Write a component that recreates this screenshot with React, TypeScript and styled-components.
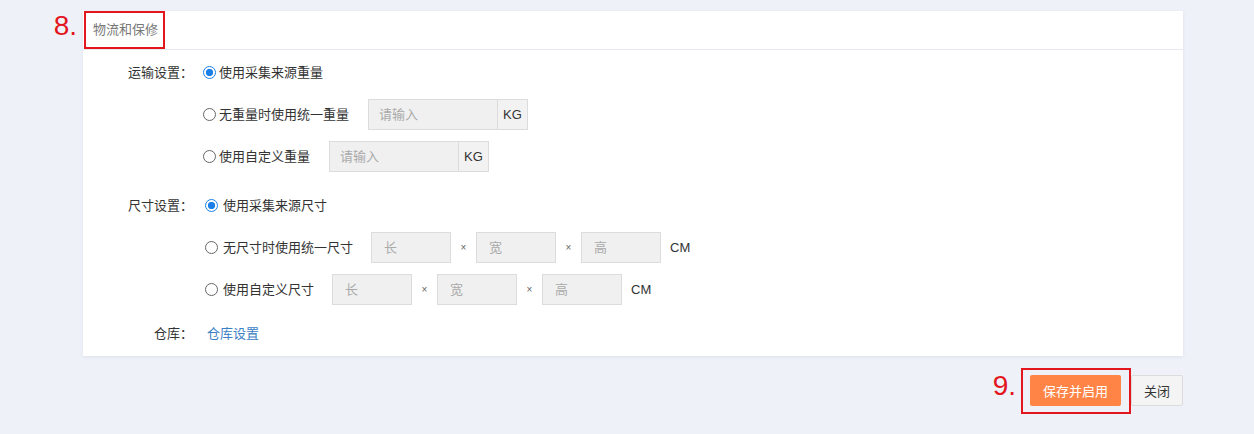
import React from "react";
import styled, { createGlobalStyle } from "styled-components";

const GlobalStyle = createGlobalStyle`
  html, body { margin: 0; padding: 0; background: #eef1f8; }
  body {
    font-family: "Liberation Sans", "Noto Sans CJK SC", sans-serif;
    font-size: 13px;
    color: #333;
  }
  * { box-sizing: border-box; }
`;

const Page = styled.div`
  width: 1254px;
  height: 434px;
  padding: 11px 0 0 83px;
`;

const Card = styled.section`
  width: 1100px;
  background: #fff;
  box-shadow: 0 1px 3px rgba(40, 50, 90, 0.08);
`;

const CardHeader = styled.header`
  height: 39px;
  border-bottom: 1px solid #e8e9ee;
  display: flex;
  align-items: center;
  padding-left: 10px;
`;

const Title = styled.h3`
  position: relative;
  margin: 0;
  font-size: 13px;
  font-weight: normal;
  line-height: 20px;
  color: #777;
`;

const MarkBox = styled.span<{ $t: number; $r: number; $b: number; $l: number }>`
  position: absolute;
  top: ${(p) => p.$t}px;
  right: ${(p) => p.$r}px;
  bottom: ${(p) => p.$b}px;
  left: ${(p) => p.$l}px;
  border: 2px solid #e3161d;
  pointer-events: none;
`;

const MarkNumber = styled.span<{ $top: number; $gap: number }>`
  position: absolute;
  top: ${(p) => p.$top}px;
  right: calc(100% + ${(p) => p.$gap}px);
  font-family: "Liberation Sans", sans-serif;
  font-size: 28px;
  line-height: 28px;
  color: #e3161d;
  white-space: nowrap;
`;

const Body = styled.div`
  padding: 7px 0 7px;
  display: flex;
  flex-direction: column;
`;

const Section = styled.div<{ $space: number }>`
  display: grid;
  grid-template-columns: 110px 1fr;
  column-gap: 10px;
  margin-top: ${(p) => p.$space}px;
`;

const Label = styled.div`
  text-align: right;
  line-height: 31px;
  height: 31px;
  color: #333;
`;

const Options = styled.div<{ $indent: number }>`
  display: flex;
  flex-direction: column;
  gap: 11px;
  padding-left: ${(p) => p.$indent}px;
`;

const OptionRow = styled.div`
  display: flex;
  align-items: center;
  height: 31px;
`;

const RadioMark = styled.span<{ $checked?: boolean }>`
  display: inline-block;
  width: 13px;
  height: 13px;
  border-radius: 50%;
  border: ${(p) => (p.$checked ? "1.5px solid #1a7fe8" : "1px solid #666")};
  background: ${(p) =>
    p.$checked
      ? "radial-gradient(circle, #1a7fe8 0 3.4px, #fff 3.9px)"
      : "#fff"};
  flex: none;
`;

const OptionText = styled.span<{ $gap: number }>`
  margin-left: ${(p) => p.$gap}px;
  line-height: 20px;
  color: #333;
`;

const InputGroup = styled.div<{ $gap: number }>`
  display: flex;
  align-items: center;
  margin-left: ${(p) => p.$gap}px;
`;

const TextInput = styled.input<{ $w: number; $pad: number }>`
  width: ${(p) => p.$w}px;
  height: 31px;
  border: 1px solid #dcdcdc;
  background: #f0f0f0;
  padding: 0 ${(p) => p.$pad}px;
  font-family: "Liberation Sans", "Noto Sans CJK SC", sans-serif;
  font-size: 13px;
  color: #333;
  outline: none;
  &::placeholder { color: #aaa; }
`;

const Addon = styled.span`
  width: 30px;
  height: 31px;
  border: 1px solid #dcdcdc;
  border-left: none;
  background: #f2f2f2;
  display: flex;
  align-items: center;
  justify-content: center;
  color: #333;
`;

const Times = styled.span`
  width: 25px;
  text-align: center;
  font-size: 10px;
  color: #666;
`;

const Unit = styled.span`
  margin-left: 9px;
  color: #333;
`;

const Link = styled.a`
  margin-left: 4px;
  line-height: 31px;
  color: #3a80c6;
  text-decoration: none;
  cursor: pointer;
`;

const Footer = styled.div`
  width: 1100px;
  margin-top: 19px;
  display: flex;
  justify-content: flex-end;
  gap: 10px;
`;

const Marked = styled.div`
  position: relative;
  display: flex;
`;

const Button = styled.button<{ $primary?: boolean; $w: number }>`
  width: ${(p) => p.$w}px;
  height: 31px;
  border-radius: 2px;
  border: ${(p) => (p.$primary ? "none" : "1px solid #dcdcdc")};
  background: ${(p) => (p.$primary ? "#ff8445" : "#f4f4f4")};
  color: ${(p) => (p.$primary ? "#fff" : "#333")};
  font-family: "Liberation Sans", "Noto Sans CJK SC", sans-serif;
  font-size: 13px;
  padding: 0;
  cursor: pointer;
`;

const Radio: React.FC<{ checked?: boolean; gap?: number; children: React.ReactNode }> = ({
  checked,
  gap = 3,
  children,
}) => (
  <>
    <RadioMark $checked={checked} />
    <OptionText $gap={gap}>{children}</OptionText>
  </>
);

const WeightInput: React.FC<{ gap: number }> = ({ gap }) => (
  <InputGroup $gap={gap}>
    <TextInput $w={130} $pad={10} placeholder="请输入" />
    <Addon>KG</Addon>
  </InputGroup>
);

const SizeInputs: React.FC<{ gap: number }> = ({ gap }) => (
  <InputGroup $gap={gap}>
    <TextInput $w={80} $pad={12} placeholder="长" />
    <Times>×</Times>
    <TextInput $w={80} $pad={12} placeholder="宽" />
    <Times>×</Times>
    <TextInput $w={80} $pad={12} placeholder="高" />
    <Unit>CM</Unit>
  </InputGroup>
);

export default function App() {
  return (
    <>
      <GlobalStyle />
      <Page>
        <Card>
          <CardHeader>
            <Title>
              物流和保修
              <MarkBox $t={-9} $r={-7} $b={-9} $l={-9} />
              <MarkNumber $top={-8} $gap={16}>8.</MarkNumber>
            </Title>
          </CardHeader>
          <Body>
            <Section $space={0}>
              <Label>运输设置：</Label>
              <Options $indent={0}>
                <OptionRow>
                  <Radio checked>使用采集来源重量</Radio>
                </OptionRow>
                <OptionRow>
                  <Radio>无重量时使用统一重量</Radio>
                  <WeightInput gap={19} />
                </OptionRow>
                <OptionRow>
                  <Radio>使用自定义重量</Radio>
                  <WeightInput gap={19} />
                </OptionRow>
              </Options>
            </Section>
            <Section $space={18}>
              <Label>尺寸设置：</Label>
              <Options $indent={2}>
                <OptionRow>
                  <Radio checked gap={5}>使用采集来源尺寸</Radio>
                </OptionRow>
                <OptionRow>
                  <Radio gap={5}>无尺寸时使用统一尺寸</Radio>
                  <SizeInputs gap={18} />
                </OptionRow>
                <OptionRow>
                  <Radio gap={5}>使用自定义尺寸</Radio>
                  <SizeInputs gap={18} />
                </OptionRow>
              </Options>
            </Section>
            <Section $space={13}>
              <Label>仓库：</Label>
              <div>
                <Link>仓库设置</Link>
              </div>
            </Section>
          </Body>
        </Card>
        <Footer>
          <Marked>
            <Button $primary $w={91}>保存并启用</Button>
            <MarkBox $t={-7} $r={-10} $b={-8} $l={-9} />
            <MarkNumber $top={-3} $gap={14}>9.</MarkNumber>
          </Marked>
          <Button $w={52}>关闭</Button>
        </Footer>
      </Page>
    </>
  );
}
